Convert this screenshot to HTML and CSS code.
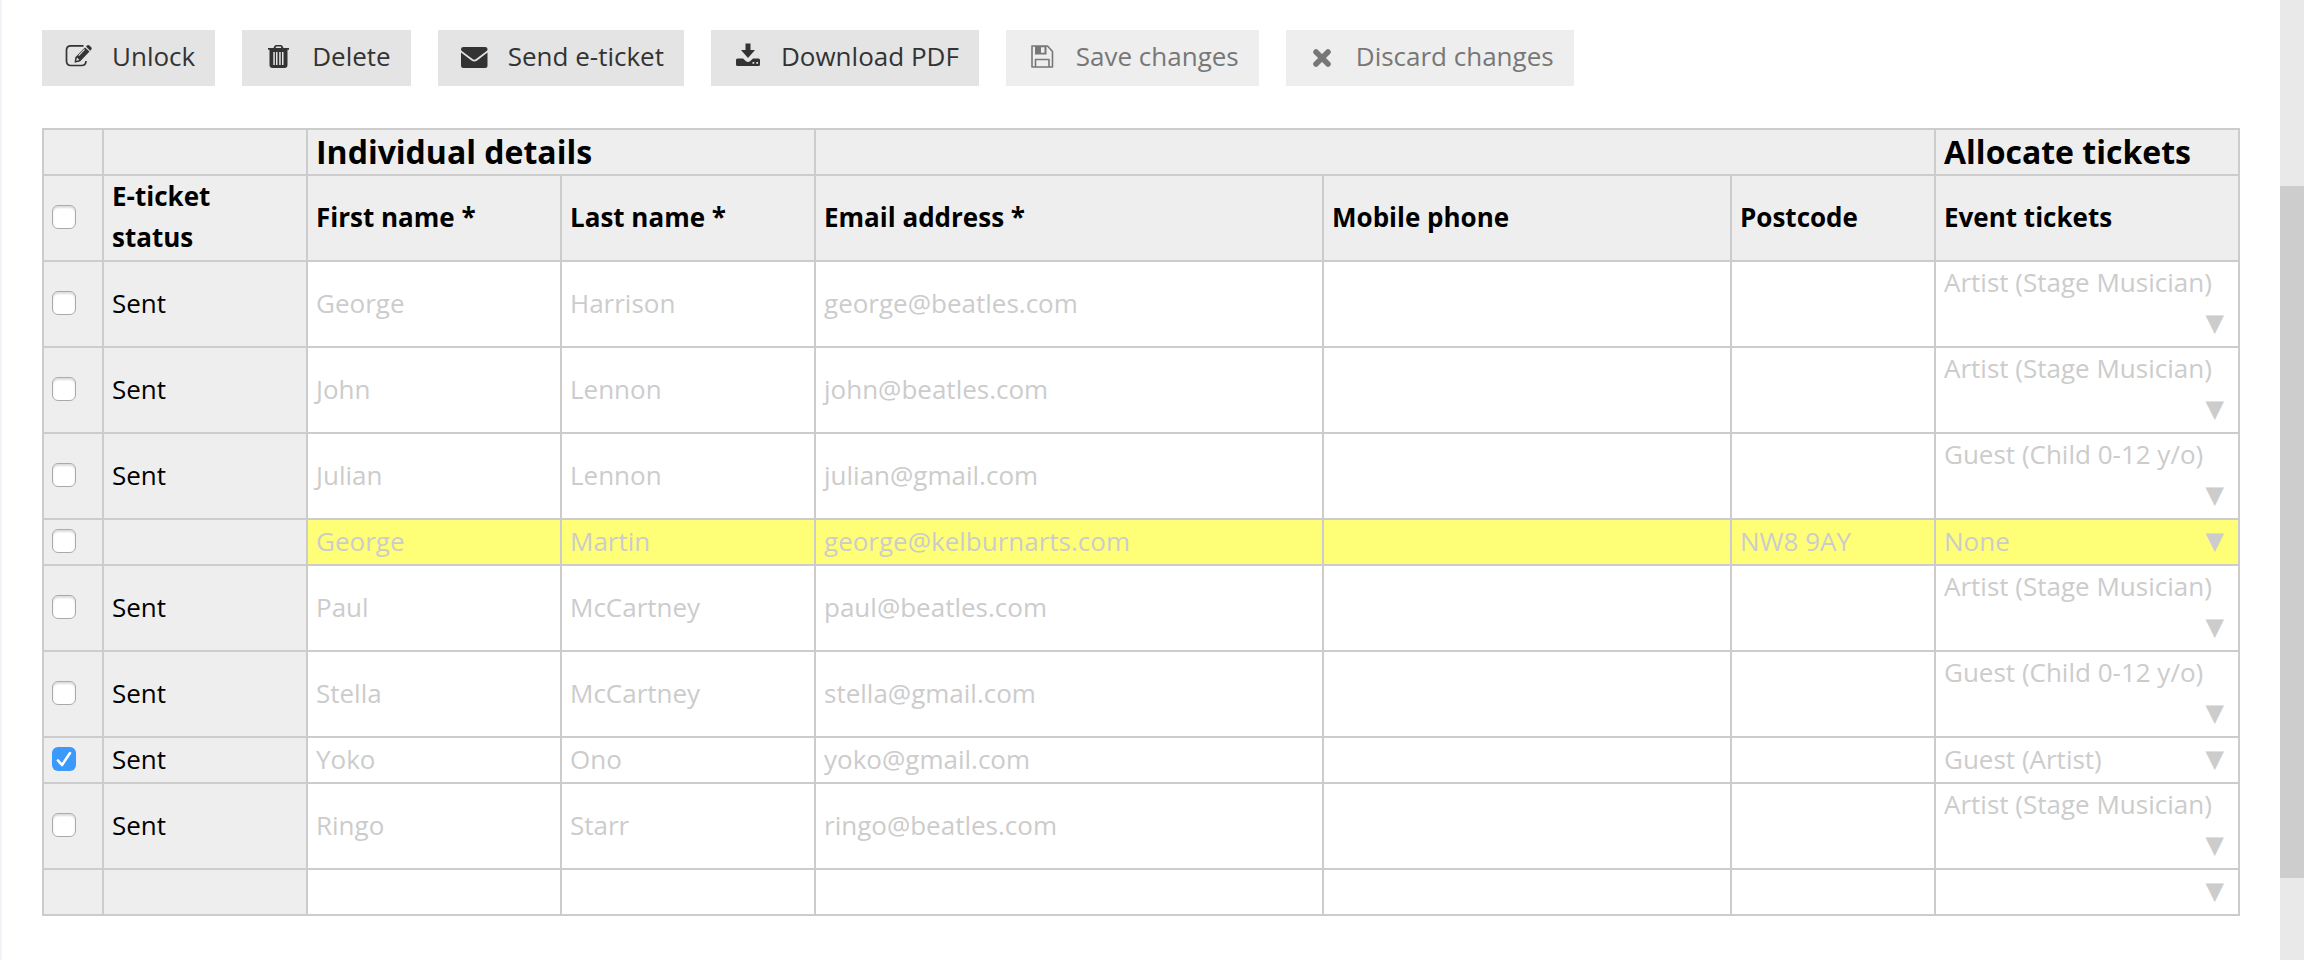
FILE: index.html
```html
<!DOCTYPE html>
<html lang="en">
<head>
    <meta charset="UTF-8">
    <meta name="viewport" content="width=device-width, initial-scale=1.0">
    <title>E-tickets</title>
    <link rel="stylesheet" href="styles.css">
</head>
<body>

    <main class="page">
        <div class="toolbar">
            <button type="button">
                <svg class="icon" viewBox="0 0 28 28"><path d="M19.500 3.800H7q-4.500 0-4.500 4.500v10.700q0 4.500 4.500 4.500h10.500q4.500 0 4.500-4.500" fill="none" stroke="currentColor" stroke-width="1.700"/><path fill="currentColor" fill-rule="evenodd" d="M21 5.500l4.500 4L16 19.500l-5.500 1.300.8-5.500zM13 15.500l-.8 3.300 3.200-.8zM15 14l6-6.200-.7-.7-6 6.200zM22 4.500l1-1q1.200-1 2.400 0l1.800 1.800q1 1.200 0 2.400l-1 1z"/></svg>
                Unlock
            </button>
            <button type="button">
                <svg class="icon" viewBox="0 0 28 28"><path fill="currentColor" fill-rule="evenodd" d="M4 6h5.500l1-2Q11 3 12.500 3h4Q18 3 18.500 4l1 2H25v1.800h-1.500V23q0 3-3 3h-12q-3 0-3-3V7.800H4zM11.500 6h6l-.8-1.500h-4.400zM9.300 10v13h1.500V10zM12 10v13h1.500V10zM15.200 10v13h1.500V10zM18 10v13h1.500V10z"/></svg>
                Delete
            </button>
            <button type="button">
                <svg class="icon" viewBox="0 0 28 28"><path fill="currentColor" d="M3.500 5h21.500Q27.500 5 27.500 7v.5q0 1-1.500 2L16 17q-1.800 1.300-3.500 0L2.500 9.500Q1 8.500 1 7.500V7Q1 5 3.500 5zM1 10.500l10.500 8q2.800 2 5.600 0L27.500 10.500V23.500q0 2.500-2.500 2.500H3.500Q1 26 1 23.500z"/></svg>
                Send e-ticket
            </button>
            <button type="button">
                <svg class="icon" viewBox="0 0 28 28"><path fill="currentColor" fill-rule="evenodd" d="M12.500 1.500h5V8H22l-7 8-7-8h4.500zM4.500 16.500H10l3 2.700q2 1.600 4 0l3-2.700h5.500q1.500 0 1.500 1.500v4.500q0 1.500-1.500 1.500h-21Q3 24 3 22.500V18q0-1.500 1.500-1.500zM19.500 20v1.800h1.800V20zM23.300 20v1.800h1.800V20z"/></svg>
                Download PDF
            </button>
            <button type="button" disabled>
                <svg class="icon" viewBox="0 0 28 28"><path fill="none" stroke="currentColor" stroke-width="1.600" stroke-linejoin="round" d="M4 4h15.500l5 5.500V25H4zM7.500 25v-7.500H21V25"/><path fill="currentColor" fill-rule="evenodd" d="M7 4h11.500v8.500H7zM13 5.200v5.600h3.500V5.200z"/></svg>
                Save changes
            </button>
            <button type="button" disabled>
                <svg class="icon" viewBox="0 0 28 28"><path fill="none" stroke="currentColor" stroke-width="5.500" stroke-linecap="round" d="M8 10l12 12M20 10L8 22"/></svg>
                Discard changes
            </button>
        </div>

        <table class="tickets">
            <colgroup>
                <col class="col-check"><col class="col-status"><col class="col-name"><col class="col-name">
                <col class="col-email"><col class="col-phone"><col class="col-postcode"><col class="col-event">
            </colgroup>
            <thead>
                <tr class="groups">
                    <th></th>
                    <th></th>
                    <th colspan="2">Individual details</th>
                    <th colspan="3"></th>
                    <th>Allocate tickets</th>
                </tr>
                <tr>
                    <th><input type="checkbox" aria-label="Select all"></th>
                    <th>E-ticket status</th>
                    <th>First name *</th>
                    <th>Last name *</th>
                    <th>Email address *</th>
                    <th>Mobile phone</th>
                    <th>Postcode</th>
                    <th>Event tickets</th>
                </tr>
            </thead>
            <tbody>
                <tr>
                    <td><input type="checkbox" aria-label="Select George Harrison"></td>
                    <td>Sent</td>
                    <td>George</td>
                    <td>Harrison</td>
                    <td>george@beatles.com</td>
                    <td></td>
                    <td></td>
                    <td>Artist (Stage Musician) <span class="arrow">▼</span></td>
                </tr>
                <tr>
                    <td><input type="checkbox" aria-label="Select John Lennon"></td>
                    <td>Sent</td>
                    <td>John</td>
                    <td>Lennon</td>
                    <td>john@beatles.com</td>
                    <td></td>
                    <td></td>
                    <td>Artist (Stage Musician) <span class="arrow">▼</span></td>
                </tr>
                <tr>
                    <td><input type="checkbox" aria-label="Select Julian Lennon"></td>
                    <td>Sent</td>
                    <td>Julian</td>
                    <td>Lennon</td>
                    <td>julian@gmail.com</td>
                    <td></td>
                    <td></td>
                    <td>Guest (Child 0-12 y/o) <span class="arrow">▼</span></td>
                </tr>
                <tr class="changed">
                    <td><input type="checkbox" aria-label="Select George Martin"></td>
                    <td></td>
                    <td>George</td>
                    <td>Martin</td>
                    <td>george@kelburnarts.com</td>
                    <td></td>
                    <td>NW8 9AY</td>
                    <td>None <span class="arrow">▼</span></td>
                </tr>
                <tr>
                    <td><input type="checkbox" aria-label="Select Paul McCartney"></td>
                    <td>Sent</td>
                    <td>Paul</td>
                    <td>McCartney</td>
                    <td>paul@beatles.com</td>
                    <td></td>
                    <td></td>
                    <td>Artist (Stage Musician) <span class="arrow">▼</span></td>
                </tr>
                <tr>
                    <td><input type="checkbox" aria-label="Select Stella McCartney"></td>
                    <td>Sent</td>
                    <td>Stella</td>
                    <td>McCartney</td>
                    <td>stella@gmail.com</td>
                    <td></td>
                    <td></td>
                    <td>Guest (Child 0-12 y/o) <span class="arrow">▼</span></td>
                </tr>
                <tr>
                    <td><input type="checkbox" aria-label="Select Yoko Ono" checked></td>
                    <td>Sent</td>
                    <td>Yoko</td>
                    <td>Ono</td>
                    <td>yoko@gmail.com</td>
                    <td></td>
                    <td></td>
                    <td>Guest (Artist) <span class="arrow">▼</span></td>
                </tr>
                <tr>
                    <td><input type="checkbox" aria-label="Select Ringo Starr"></td>
                    <td>Sent</td>
                    <td>Ringo</td>
                    <td>Starr</td>
                    <td>ringo@beatles.com</td>
                    <td></td>
                    <td></td>
                    <td>Artist (Stage Musician) <span class="arrow">▼</span></td>
                </tr>
                <tr>
                    <td></td>
                    <td></td>
                    <td></td>
                    <td></td>
                    <td></td>
                    <td></td>
                    <td></td>
                    <td><span class="arrow">▼</span></td>
                </tr>
            </tbody>
        </table>
    </main>

    <div class="scrollbar"><div class="thumb"></div></div>

</body>
</html>
```
FILE: styles.css
```css
* {
    box-sizing: border-box;
}

body {
    margin: 0;
    min-height: 100vh;
    display: flex;
    background: #fff;
    color: #000;
    font-family: "Open Sans", sans-serif;
    font-size: 26px;
    line-height: 41px;
}

.page {
    flex: 1;
    padding: 30px 40px;
    border-left: 2px solid #f0f4f9;
}

.toolbar {
    display: flex;
    gap: 27px;
    margin-bottom: 42px;
}

button {
    display: flex;
    align-items: center;
    gap: 20px;
    height: 56px;
    padding: 0 20px 4px 22px;
    border: none;
    background: #e4e4e4;
    color: #333;
    font: inherit;
    cursor: pointer;
}

button:disabled {
    background: #eee;
    color: #777;
    cursor: default;
}

.icon {
    width: 28px;
    height: 28px;
}

.tickets {
    width: 100%;
    table-layout: fixed;
    border-collapse: collapse;
}

.col-check {
    width: 60px;
}

.col-status, .col-postcode {
    width: 204px;
}

.col-name {
    width: 254px;
}

.col-email {
    width: 508px;
}

.col-phone {
    width: 408px;
}

.col-event {
    width: 304px;
}

th, td {
    height: 46px;
    padding: 0 8px 2px;
    border: 2px solid #ccc;
    text-align: left;
    vertical-align: middle;
}

th {
    background: #eee;
}

.groups th {
    font-size: 32px;
}

td {
    color: #ccc;
}

td:nth-child(-n+2) {
    background: #eee;
    color: #000;
}

.changed td:nth-child(n+3) {
    background: #ffff77;
}

.arrow {
    float: right;
    padding: 0 6px 0 12px;
    font-family: "DejaVu Sans", sans-serif;
    font-size: 24px;
}

input[type="checkbox"] {
    appearance: none;
    display: block;
    width: 24px;
    height: 24px;
    margin: 0;
    border: 1px solid #aaa;
    border-radius: 6px;
    background: #fff;
    box-shadow: inset 0 2px 2px #ddd;
}

input[type="checkbox"]:checked {
    border: none;
    background: #3b99fc url("data:image/svg+xml,%3Csvg xmlns='http://www.w3.org/2000/svg' viewBox='0 0 24 24'%3E%3Cpath d='M6 13.500l4 4.500 8-12' fill='none' stroke='white' stroke-width='2.600' stroke-linecap='round' stroke-linejoin='round'/%3E%3C/svg%3E");
    box-shadow: none;
}

.scrollbar {
    width: 24px;
    padding-top: 186px;
    background: #e9e9e9;
}

.thumb {
    height: 692px;
    background: #cdcdcd;
}
```
